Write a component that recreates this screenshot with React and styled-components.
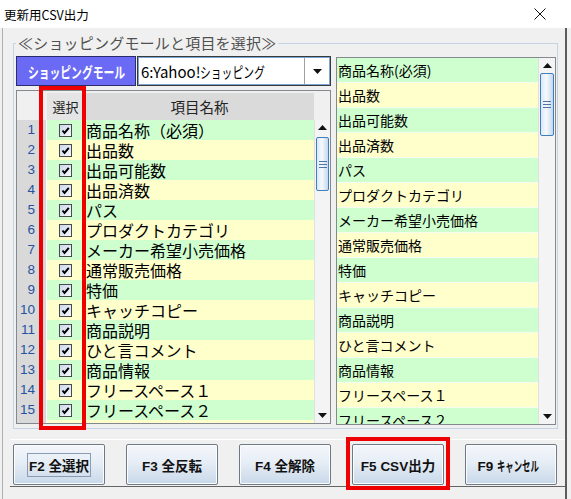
import React from "react";
import styled, { createGlobalStyle, css } from "styled-components";

const GlobalStyle = createGlobalStyle`
  html, body {
    margin: 0;
    padding: 0;
    background: #d4d4d4;
  }
  * { box-sizing: border-box; }
`;

const JP = `"Noto Sans CJK JP", "Noto Sans", sans-serif`;
const UI = `"Liberation Sans", "Noto Sans CJK JP", sans-serif`;

const Window = styled.div`
  position: relative;
  width: 571px;
  height: 499px;
  display: flex;
  flex-direction: column;
  font-family: ${JP};
  background: #f0f0f0;
  overflow: hidden;
`;

const TitleBar = styled.div`
  height: 28px;
  flex: none;
  background: #ffffff;
  display: flex;
  align-items: center;
  justify-content: space-between;
  padding-left: 4px;
  font-size: 12.5px;
  color: #000;
`;

const CloseBtn = styled.div`
  width: 46px;
  height: 28px;
  margin-right: 8px;
  display: flex;
  align-items: center;
  justify-content: center;
`;

const Client = styled.div`
  flex: 1;
  margin-left: 2px;
  margin-right: 4px;
  border-left: 1px solid #b0b0b0;
  border-right: 2px solid #5c5c5c;
  background: #f0f0f0;
  display: flex;
  flex-direction: column;
`;

const Group = styled.fieldset`
  margin: 5px 7px 0 10px;
  padding: 3px 3px 3px 2px;
  border: 1px solid #c4d4e4;
  min-width: 0;
`;

const Legend = styled.legend`
  padding: 0 2px;
  font-size: 15px;
  line-height: 20px;
  color: #505050;
  letter-spacing: 0.2px;
`;

const Columns = styled.div`
  display: grid;
  grid-template-columns: 315px 220px;
  column-gap: 5px;
`;

const LeftCol = styled.div`
  display: flex;
  flex-direction: column;
  gap: 4px;
`;

const MallRow = styled.div`
  display: flex;
  height: 30px;
  gap: 1px;
`;

const MallLabel = styled.div`
  width: 120px;
  background: #6a6af4;
  border: 1px solid #2c2c6c;
  color: #fff;
  font-weight: bold;
  font-size: 15px;
  display: flex;
  align-items: center;
  justify-content: center;
  white-space: nowrap;
`;

/* half-width katakana look: full-width glyphs squeezed horizontally */
const Narrow = styled.span`
  display: inline-block;
  transform: scaleX(${(p) => p.$sx || 0.75});
  transform-origin: ${(p) => p.$origin || "center"};
  margin-right: ${(p) => p.$pull || 0}px;
`;

const Select = styled.div`
  flex: 1;
  display: flex;
  border: 1px solid #3a3a3a;
  box-shadow: inset 0 0 0 1px #79a6d6;
  background: #fff;
`;

const SelectText = styled.div`
  flex: 1;
  display: flex;
  align-items: center;
  padding-left: 3px;
  font-size: 15px;
  color: #000;
  white-space: nowrap;
`;

const SelectArrow = styled.div`
  width: 25px;
  margin: 1px 1px 1px 0;
  border-left: 1px solid #a0a0a0;
  display: flex;
  align-items: center;
  justify-content: center;
  background: #fff;
`;

const Table = styled.div`
  height: 334px;
  border: 1px solid #84888f;
  background: #f0f0f0;
  display: flex;
  flex-direction: column;
  overflow: hidden;
`;

const HeaderRow = styled.div`
  display: grid;
  grid-template-columns: 30px 38px 1fr 16px;
  height: 29px;
  flex: none;
`;

const HeadCell = styled.div`
  display: flex;
  align-items: center;
  justify-content: center;
  font-size: ${(p) => (p.$small ? "13px" : "14.5px")};
  color: #222;
  background: ${(p) => p.$bg || "#f0f0f0"};
  border-right: ${(p) => (p.$line ? "1px solid #c8c8c8" : "none")};
  margin-top: ${(p) => (p.$top ? "2px" : "0")};
`;

const TableBody = styled.div`
  flex: 1;
  display: flex;
  min-height: 0;
`;

const Rows = styled.div`
  flex: 1;
  overflow: hidden;
`;

const Row = styled.div`
  display: grid;
  grid-template-columns: 30px 38px 1fr;
  height: 20px;
`;

const NumCell = styled.div`
  background: #d9d9d9;
  border-right: 1px solid #fff;
  border-bottom: 1px solid #fff;
  color: #2453a3;
  font-family: ${UI};
  font-size: 13.5px;
  text-align: right;
  padding-right: 11px;
  line-height: 20px;
`;

const CheckCell = styled.div`
  background: ${(p) => (p.$odd ? "#cfffcf" : "#ffffcc")};
  display: flex;
  align-items: center;
  justify-content: center;
  padding-right: 1px;
`;

const CheckBox = styled.div`
  width: 13px;
  height: 13px;
  border: 1px solid #4a4a4a;
  background: linear-gradient(135deg, #c9d8ec, #f6f9fd);
  display: flex;
  align-items: center;
  justify-content: center;
`;

const ItemCell = styled.div`
  background: ${(p) => (p.$odd ? "#cfffcf" : "#ffffcc")};
  font-size: 16px;
  line-height: 20px;
  padding-left: 1px;
  color: #000;
  white-space: nowrap;
`;

const ScrollBar = styled.div`
  width: ${(p) => p.$w}px;
  flex: none;
  background: #f4f4f4;
  border-left: 1px solid #e0e0e0;
  display: flex;
  flex-direction: column;
`;

const ScrollArrow = styled.div`
  height: 15px;
  flex: none;
  display: flex;
  align-items: center;
  justify-content: center;
`;

const Track = styled.div`
  flex: 1;
  padding-top: ${(p) => p.$offset}px;
`;

const Thumb = styled.div`
  height: ${(p) => p.$h}px;
  margin: 0 1px;
  border: 1px solid #3f7fc0;
  border-radius: 2px;
  background: linear-gradient(90deg, #dce8f6, #f5f9fd 45%, #c5d7ee);
  display: flex;
  flex-direction: column;
  align-items: center;
  justify-content: center;
  gap: 2px;
`;

const Grip = styled.div`
  width: 8px;
  height: 1px;
  background: #4f74a8;
`;

const List = styled.div`
  height: 368px;
  margin-top: 1px;
  border: 1px solid #84888f;
  display: flex;
  overflow: hidden;
`;

const ListRows = styled.div`
  flex: 1;
  overflow: hidden;
`;

const ListItem = styled.div`
  height: 25px;
  background: ${(p) => (p.$odd ? "#cfffcf" : "#ffffcc")};
  border-bottom: 1px solid #f4fbef;
  font-size: 14px;
  line-height: 24px;
  padding-left: 1px;
  color: #000;
  white-space: nowrap;
`;

const ButtonPanel = styled.div`
  margin: 10px 0 0 7px;
  height: 48px;
  border-top: 1px solid #ffffff;
  border-bottom: 1px solid #646464;
  padding: 4px 0 1px 3px;
  display: flex;
  gap: 21px;
`;

const FnButton = styled.button`
  width: 92px;
  height: 41px;
  padding: 0;
  border: 1px solid #707a86;
  border-radius: 2px;
  background: linear-gradient(#f4f7fb, #e6edf5 45%, #c8d8ea);
  box-shadow: inset 0 0 0 1px #fbfcfe;
  font-family: ${UI};
  font-weight: bold;
  font-size: 13.5px;
  color: #111;
  display: flex;
  align-items: center;
  justify-content: center;
  white-space: nowrap;
`;

const FnLabel = styled.span`
  padding: 1px 1px;
  border: 1px solid transparent;
  ${(p) =>
    p.$focus &&
    css`
      border-color: #8a9cb4;
    `}
`;

const Highlight = styled.div`
  position: absolute;
  border: 4px solid #ee0000;
  pointer-events: none;
`;

const items = [
  "商品名称（必須）",
  "出品数",
  "出品可能数",
  "出品済数",
  "パス",
  "プロダクトカテゴリ",
  "メーカー希望小売価格",
  "通常販売価格",
  "特価",
  "キャッチコピー",
  "商品説明",
  "ひと言コメント",
  "商品情報",
  "フリースペース１",
  "フリースペース２",
  "フリースペース３",
];

const listItems = [
  "商品名称(必須)",
  "出品数",
  "出品可能数",
  "出品済数",
  "パス",
  "プロダクトカテゴリ",
  "メーカー希望小売価格",
  "通常販売価格",
  "特価",
  "キャッチコピー",
  "商品説明",
  "ひと言コメント",
  "商品情報",
  "フリースペース１",
  "フリースペース２",
];

const buttons = [
  { key: "F2", label: "全選択", focus: true },
  { key: "F3", label: "全反転" },
  { key: "F4", label: "全解除" },
  { key: "F5", label: "CSV出力" },
  { key: "F9", label: "キャンセル", narrow: true },
];

const Tri = ({ down }) => (
  <svg width="9" height="5" viewBox="0 0 9 5">
    <path d={down ? "M0 0 H9 L4.5 5 Z" : "M0 5 H9 L4.5 0 Z"} fill="#111" />
  </svg>
);

const Check = () => (
  <svg width="9" height="9" viewBox="0 0 9 9">
    <path d="M1.5 4.5 L3.5 7 L7.8 1.8" stroke="#000" strokeWidth="2" fill="none" />
  </svg>
);

const Scroll = ({ w, offset, h }) => (
  <ScrollBar $w={w}>
    <ScrollArrow>
      <Tri />
    </ScrollArrow>
    <Track $offset={offset}>
      <Thumb $h={h}>
        <Grip />
        <Grip />
        <Grip />
      </Thumb>
    </Track>
    <ScrollArrow>
      <Tri down />
    </ScrollArrow>
  </ScrollBar>
);

export default function App() {
  return (
    <>
      <GlobalStyle />
      <Window>
        <TitleBar>
          <span>更新用CSV出力</span>
          <CloseBtn>
            <svg width="12" height="12" viewBox="0 0 12 12">
              <path d="M0.5 0.5 L11.5 11.5 M11.5 0.5 L0.5 11.5" stroke="#111" strokeWidth="1" />
            </svg>
          </CloseBtn>
        </TitleBar>
        <Client>
          <Group>
            <Legend>≪ショッピングモールと項目を選択≫</Legend>
            <Columns>
              <LeftCol>
                <MallRow>
                  <MallLabel>
                    <Narrow $sx={0.72}>ショッピングモール</Narrow>
                  </MallLabel>
                  <Select>
                    <SelectText>
                      6:Yahoo!
                      <Narrow $sx={0.72} $origin="left">
                        ショッピング
                      </Narrow>
                    </SelectText>
                    <SelectArrow>
                      <Tri down />
                    </SelectArrow>
                  </Select>
                </MallRow>
                <Table>
                  <HeaderRow>
                    <HeadCell />
                    <HeadCell $small $top $bg="#e4e4e4" $line>
                      選択
                    </HeadCell>
                    <HeadCell $top $bg="#dadada">
                      項目名称
                    </HeadCell>
                    <HeadCell />
                  </HeaderRow>
                  <TableBody>
                    <Rows>
                      {items.map((name, i) => (
                        <Row key={name}>
                          <NumCell>{i + 1}</NumCell>
                          <CheckCell $odd={i % 2 === 0}>
                            <CheckBox>
                              <Check />
                            </CheckBox>
                          </CheckCell>
                          <ItemCell $odd={i % 2 === 0}>{name}</ItemCell>
                        </Row>
                      ))}
                    </Rows>
                    <Scroll w={16} offset={2} h={54} />
                  </TableBody>
                </Table>
              </LeftCol>
              <List>
                <ListRows>
                  {listItems.map((name, i) => (
                    <ListItem key={name} $odd={i % 2 === 0}>
                      {name}
                    </ListItem>
                  ))}
                </ListRows>
                <Scroll w={17} offset={0} h={63} />
              </List>
            </Columns>
          </Group>
          <ButtonPanel>
            {buttons.map((b) => (
              <FnButton key={b.key}>
                <FnLabel $focus={b.focus}>
                  {b.key}{" "}
                  {b.narrow ? (
                    <Narrow $sx={0.62} $origin="left" $pull={-20}>
                      {b.label}
                    </Narrow>
                  ) : (
                    b.label
                  )}
                </FnLabel>
              </FnButton>
            ))}
          </ButtonPanel>
        </Client>
        <Highlight style={{ left: 39, top: 86, width: 47, height: 344 }} />
        <Highlight style={{ left: 346, top: 437, width: 104, height: 53 }} />
      </Window>
    </>
  );
}
